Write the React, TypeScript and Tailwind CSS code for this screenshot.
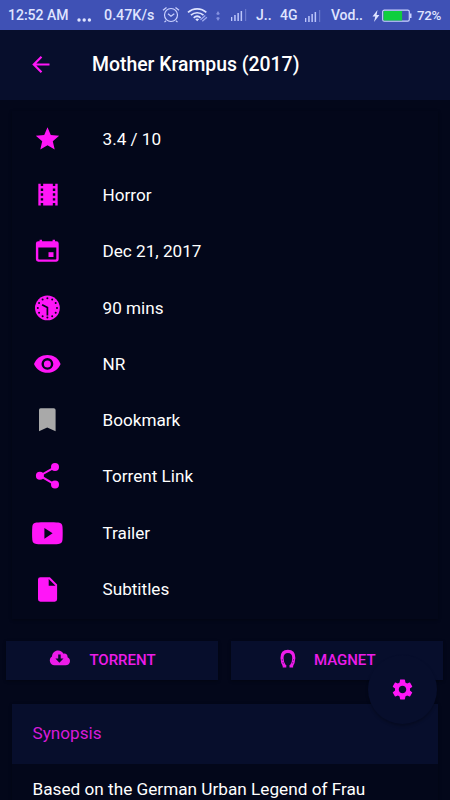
import React from "react";
import { MdSettings, MdStar, MdTheaters } from "react-icons/md";

function Glyph({ children, className = "" }: { children: React.ReactNode; className?: string }) {
  return (
    <svg viewBox="0 0 32 32" className={`h-8 w-8 overflow-visible ${className}`} fill="currentColor">
      {children}
    </svg>
  );
}

const BackIcon = () => (
  <svg viewBox="0 0 25 25" className="mb-[2px] ml-7 h-[25px] w-[25px]" fill="none" stroke="#ff16f7" strokeWidth="2.200">
    <path d="M21.500 12.500H6M13.500 4.800l-7.700 7.700 7.700 7.700" />
  </svg>
);

const CalendarIcon = () => (
  <Glyph>
    <path
      fillRule="evenodd"
      d="M7.300 6.200h1.300V4.800H11v1.400h10.600V4.800H24v1.400h1.300a2.400 2.400 0 0 1 2.400 2.600v15.500a2.400 2.400 0 0 1-2.400 2.400h-18a2.400 2.400 0 0 1-2.400-2.400V8.800a2.400 2.400 0 0 1 2.400-2.600Zm0 6.400v10.900c0 .6.4 1 1 1h16c.6 0 1-.4 1-1V12.600Z"
    />
    <path d="M17.500 17.200h5v4.800h-5z" />
  </Glyph>
);

const ClockIcon = () => (
  <Glyph>
    <circle cx="16.400" cy="15.900" r="12.400" />
    <g className="fill-[#03071a]">
      {Array.from({ length: 12 }, (_, i) => (
        <circle
          key={i}
          cx={16.4 + 9.6 * Math.sin((i * Math.PI) / 6)}
          cy={15.9 - 9.6 * Math.cos((i * Math.PI) / 6)}
          r="1"
        />
      ))}
    </g>
    <path d="m11.100 12.700 5.300 2.900v8" fill="none" strokeWidth="1.700" className="stroke-[#03071a]" />
  </Glyph>
);

const EyeIcon = () => (
  <Glyph>
    <path d="M3 15.900C5.400 10.200 10.400 7 16.400 7s10.800 3.200 13.200 8.900c-2.400 5.700-7.200 8.900-13.200 8.900S5.400 21.600 3 15.900Z" />
    <circle cx="16.400" cy="15.900" r="4.700" fill="none" strokeWidth="2.400" className="stroke-[#03071a]" />
  </Glyph>
);

const BookmarkIcon = () => (
  <Glyph className="text-[#a9a9a9]">
    <path d="M10 4.200h12.800A1.800 1.800 0 0 1 24.600 6v21.200l-8.400-3.700L8 27.200V6A1.800 1.800 0 0 1 10 4.200Z" />
  </Glyph>
);

const ShareIcon = () => (
  <Glyph>
    <path d="M24 7.100 8.900 15.700 24 24.600" fill="none" stroke="currentColor" strokeWidth="2" />
    <circle cx="24" cy="7.100" r="4" />
    <circle cx="8.900" cy="15.700" r="4" />
    <circle cx="24" cy="24.600" r="4" />
  </Glyph>
);

const VideoIcon = () => (
  <Glyph>
    <path
      fillRule="evenodd"
      d="M5.400 5.500c4-.5 18-.5 22 0 2.800.3 3.900 1.600 4.100 4.200.3 3.800.3 9.200 0 13-.2 2.600-1.300 3.900-4.100 4.200-4 .5-18 .5-22 0-2.800-.3-3.900-1.600-4.100-4.200-.3-3.800-.3-9.200 0-13 .2-2.600 1.300-3.900 4.100-4.200Zm8 5.400v10.800l8.200-5.400Z"
    />
  </Glyph>
);

const DocumentIcon = () => (
  <Glyph>
    <path
      fillRule="evenodd"
      d="M9.400 4.200h9.500l7.200 7.300v14.800a2.400 2.400 0 0 1-2.400 2.400H9.400A2.400 2.400 0 0 1 7 26.300V6.600a2.400 2.400 0 0 1 2.400-2.400Zm8.300 1.900v6.600h6.800Z"
    />
  </Glyph>
);

const CloudIcon = () => (
  <svg viewBox="0 0 22 16" className="mb-[5px] h-4 w-[22px]" fill="currentColor">
    <path
      fillRule="evenodd"
      d="M5.400 15.300A4.800 4.800 0 0 1 3 6.500C3.200 2.900 5.800.5 9.100.5c2.500 0 4.500 1.300 5.400 3.200 2.300-.5 4.400 1.300 4.100 3.500 1.500.7 2.400 2 2.400 3.700 0 2.500-1.900 4.400-4.500 4.400ZM9.200 4.400v4.200H6.400l4 4.100 4.100-4.100h-2.800V4.400Z"
    />
  </svg>
);

const HorseshoeIcon = () => (
  <svg viewBox="0 0 18 20" className="mb-[3px] h-5 w-[18px]" fill="none">
    <path
      d="M5.600 17.200C4 14.900 3 12.100 3 8.900 3 4.800 5.300 2.400 8.900 2.400s5.900 2.400 5.900 6.500c0 3.200-1 6-2.600 8.300"
      stroke="currentColor"
      strokeWidth="3.100"
    />
    <path d="M3.700 17.200h3.600M10.500 17.200h3.600" stroke="currentColor" strokeWidth="2.400" />
    <path
      d="M4.500 14.500C3.700 12.700 3.200 10.900 3.200 9.200M13.300 14.500c.8-1.800 1.300-3.600 1.300-5.300"
      className="stroke-[#070e2c]"
      strokeWidth=".6"
      strokeDasharray="1.300 1.700"
    />
  </svg>
);

const SignalIcon = () => (
  <svg viewBox="0 0 17 12" className="h-3 w-[17px] shrink-0" fill="#bdc6fb">
    <path d="M0 8h1.300v4H0zM3.200 6h1.500v6H3.200zM6.400 4h1.500v8H6.400zM9.600 2h1.500v10H9.600z" />
    <path d="M14 0h1.200v12H14z" opacity=".35" />
  </svg>
);

function StatusBar() {
  return (
    <div className="flex h-[30px] items-center bg-[#3f51b5] pt-px text-[13.300px] font-medium whitespace-nowrap text-[#dfe4ff]">
      <span className="ml-2 w-[62px] text-[14px]">12:52 AM</span>
      <svg viewBox="0 0 15 4" className="mt-2 ml-[7px] h-1 w-[15px]" fill="currentColor">
        <circle cx="2" cy="2" r="1.700" />
        <circle cx="7.200" cy="2" r="1.700" />
        <circle cx="12.400" cy="2" r="1.700" />
      </svg>
      <span className="ml-[12px] w-[51px] text-[14.300px]">0.47K/s</span>
      <svg viewBox="0 0 18 18" className="mb-px ml-[7px] h-[18px] w-[18px]" fill="none" stroke="#cbd2ff" strokeWidth="1.200">
        <circle cx="9" cy="9" r="6.500" />
        <path d="m6 7.700 3 2.500 3.300-2.500M1 4.300 4.500 1.500M17 4.300l-3.500-2.800M4 14.700l-1.500 1.400M14 14.700l1.500 1.400" />
      </svg>
      <svg viewBox="0 0 22 18" className="mb-px ml-[7px] h-[18px] w-[22px]" fill="none" stroke="#dfe4ff" strokeWidth="1.700">
        <path d="M1 6.400c5-4.800 13.300-4.800 18.300 0M3.900 9.200c3.500-3.300 9-3.300 12.600 0M6.700 11.800c2-1.800 4.900-1.800 6.900 0" />
        <path d="m8.300 13.300 1.900 2 1.900-2a3 3 0 0 0-3.800 0Z" fill="#dfe4ff" stroke="none" />
        <path d="m13.500 13.800 4.800-4.300M15.300 15.300l4.600-4.100" stroke="#9faaf0" strokeWidth="1.300" />
      </svg>
      <svg viewBox="0 0 6 14" className="ml-1.5 h-3.5 w-1.5" fill="#8491df">
        <path d="m3 2 2 3.300H3.700V6H2.300v-.7H1ZM3 12 1 8.700h1.300V8h1.400v.7H5Z" />
      </svg>
      <div className="mb-0.5 ml-2.5 flex"><SignalIcon /></div>
      <span className="ml-2 w-[16px] text-[14px]">J..</span>
      <span className="ml-2 w-[19px] text-[14px]">4G</span>
      <div className="ml-1.5 flex"><SignalIcon /></div>
      <span className="ml-[9px] w-[32px] text-[14px] tracking-[-0.1px]">Vod..</span>
      <svg viewBox="0 0 8 14" className="ml-[9px] h-3.5 w-2" fill="#dfe4ff">
        <path d="M5.500 1 .5 7.500h2.800L2 13l5.400-7H4.600Z" />
      </svg>
      <svg viewBox="0 0 30 14" className="ml-[2px] h-3.5 w-[30px]">
        <rect x=".7" y="1.200" width="26.600" height="11" rx="1.600" fill="none" stroke="#cbd2ff" strokeWidth="1.200" />
        <rect x="1.600" y="2" width="18.500" height="9.500" fill="#0fce3e" />
        <path d="M28 4.500h1.500v4.600H28z" fill="#cbd2ff" />
      </svg>
      <span className="mt-px ml-[5px] tracking-[-0.3px]">72%</span>
    </div>
  );
}

const details = [
  { label: "3.4 / 10", icon: <MdStar className="h-7 w-7 translate-x-[0.5px]" /> },
  { label: "Horror", icon: <MdTheaters className="h-[29px] w-[29px] translate-x-[0.5px]" /> },
  { label: "Dec 21, 2017", icon: <CalendarIcon /> },
  { label: "90 mins", icon: <ClockIcon /> },
  { label: "NR", icon: <EyeIcon /> },
  { label: "Bookmark", icon: <BookmarkIcon /> },
  { label: "Torrent Link", icon: <ShareIcon /> },
  { label: "Trailer", icon: <VideoIcon /> },
  { label: "Subtitles", icon: <DocumentIcon /> },
];

export default function App() {
  return (
    <div className="relative h-[800px] w-[450px] overflow-hidden bg-[#03071a] font-[Roboto,sans-serif] text-white">
      <StatusBar />
      <header className="flex h-[70px] items-center bg-[#070e2c]">
        <BackIcon />
        <h1 className="ml-[39px] text-[19.400px] leading-7 font-medium">Mother Krampus (2017)</h1>
      </header>
      <main>
        <ul className="mx-3 mt-[10.500px] h-[508.500px] shadow-[0_1px_3px_#00000059]">
          {details.map(({ label, icon }) => (
            <li key={label} className="flex h-[56.300px] items-center">
              <span className="ml-[19px] flex w-8 justify-center text-[#ff16f7]">{icon}</span>
              <span className="ml-[39.500px] text-[17.150px] leading-6">{label}</span>
            </li>
          ))}
        </ul>
        <div className="mt-[22px] flex gap-[13px] pr-[6px] pl-[6.400px] text-[15px] font-medium text-[#ed1ce9]">
          <button className="flex h-[39px] w-[212px] items-center bg-[#070e2c] pl-[43px] shadow-[0_1px_3px_#00000059]">
            <CloudIcon />
            <span className="ml-[18px]">TORRENT</span>
          </button>
          <button className="flex h-[39px] w-[212px] items-center bg-[#070e2c] pl-[47.500px] shadow-[0_1px_3px_#00000059]">
            <HorseshoeIcon />
            <span className="ml-[17px]">MAGNET</span>
          </button>
        </div>
        <section className="mx-3 mt-6 h-[120px] shadow-[0_1px_3px_#00000059]">
          <h2 className="flex h-[60px] items-center bg-[#070e2c] pb-px pl-[20.500px] text-[17.150px] text-[#d71bd9]">Synopsis</h2>
          <p className="mt-[13px] ml-[20.500px] text-[17.200px] leading-6 whitespace-nowrap">Based on the German Urban Legend of Frau</p>
        </section>
      </main>
      <button className="absolute top-[655px] left-[368px] flex h-[69px] w-[69px] items-center justify-center rounded-full bg-[#070e2c] pb-px text-[#ff16f7] shadow-[0_2px_3px_#00000040]">
        <MdSettings size={25} />
      </button>
    </div>
  );
}
